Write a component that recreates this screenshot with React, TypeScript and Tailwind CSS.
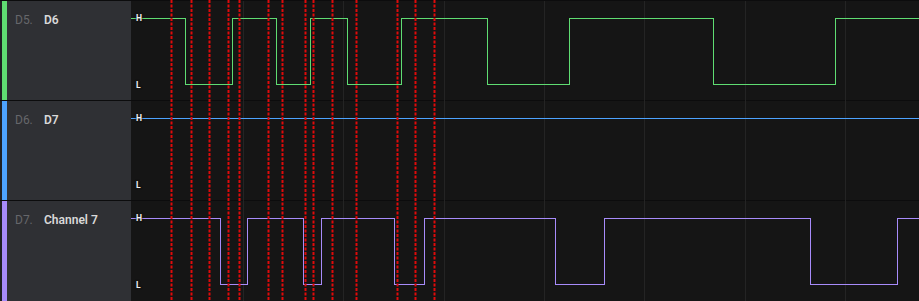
import React from 'react';

type Channel = {
  index: string;
  name: string;
  color: string;
  edges: number[];
};

const channels: Channel[] = [
  { index: 'D5.', name: 'D6', color: '#5fdc72', edges: [185, 232, 276, 310, 347, 401, 487, 569, 713, 835] },
  { index: 'D6.', name: 'D7', color: '#4da3ff', edges: [] },
  { index: 'D7.', name: 'Channel 7', color: '#a78bfa', edges: [220, 247, 303, 321, 394, 424, 555, 604, 810, 897] },
];

const gridLines = [243, 343, 444, 544, 644, 745, 845];
const markers = [171, 191, 209, 228, 239, 268, 282, 305, 313, 332, 356, 397, 415, 434];

const OFFSET = 131;
const HIGH = 17.5;
const LOW = 83.5;

const wavePath = (edges: number[]) => {
  let d = `M0,${HIGH}`;
  let high = true;
  for (const e of edges) {
    const x = e - OFFSET + 0.5;
    d += ` H${x} V${high ? LOW : HIGH}`;
    high = !high;
  }
  d += ` H788`;
  return d;
};

const Row = ({ ch, last }: { ch: Channel; last?: boolean }) => (
  <div className={`flex border-t border-[#0c0c0d] ${last ? 'h-[101px]' : 'h-[100px]'}`}>
    <div className="w-[2px] bg-[#1f2023]" />
    <div className="w-[5px]" style={{ backgroundColor: ch.color }} />
    <div className="w-[124px] bg-[#2f3034] flex items-start pt-[10px] pl-[8px] text-[12px]">
      <span className="w-[29px] text-[#66676b]">{ch.index}</span>
      <span className="font-semibold text-[#d9d9d9]">{ch.name}</span>
    </div>
    <div className="relative flex-1 bg-[#151515]">
      <svg className="absolute inset-0" width="788" height="100" shapeRendering="crispEdges">
        {gridLines.map((g) => (
          <line key={g} x1={g - OFFSET + 0.5} x2={g - OFFSET + 0.5} y1="0" y2="100" stroke="#242424" strokeWidth="1" />
        ))}
        <path d={wavePath(ch.edges)} fill="none" stroke={ch.color} strokeWidth="1" />
      </svg>
      <span className="absolute left-[5px] top-[11px] text-[8.5px] font-bold leading-[12px] text-[#eeeeee] [text-shadow:0_0_2px_#151515,0_0_2px_#151515]">
        H
      </span>
      <span className="absolute left-[5px] top-[78px] text-[8.5px] font-bold leading-[12px] text-[#eeeeee] [text-shadow:0_0_2px_#151515,0_0_2px_#151515]">
        L
      </span>
    </div>
  </div>
);

export default function App() {
  return (
    <div className="relative w-[919px] h-[301px] overflow-hidden bg-[#0c0c0d] font-['Roboto',sans-serif]">
      {channels.map((ch, i) => (
        <Row key={ch.name} ch={ch} last={i === channels.length - 1} />
      ))}
      <svg className="absolute left-0 top-0 pointer-events-none" width="919" height="301">
        {markers.map((m) => (
          <line key={m} x1={m + 0.5} x2={m + 0.5} y1="0" y2="301" stroke="#e00a0a" strokeWidth="2" strokeDasharray="3 1.5" />
        ))}
      </svg>
    </div>
  );
}
